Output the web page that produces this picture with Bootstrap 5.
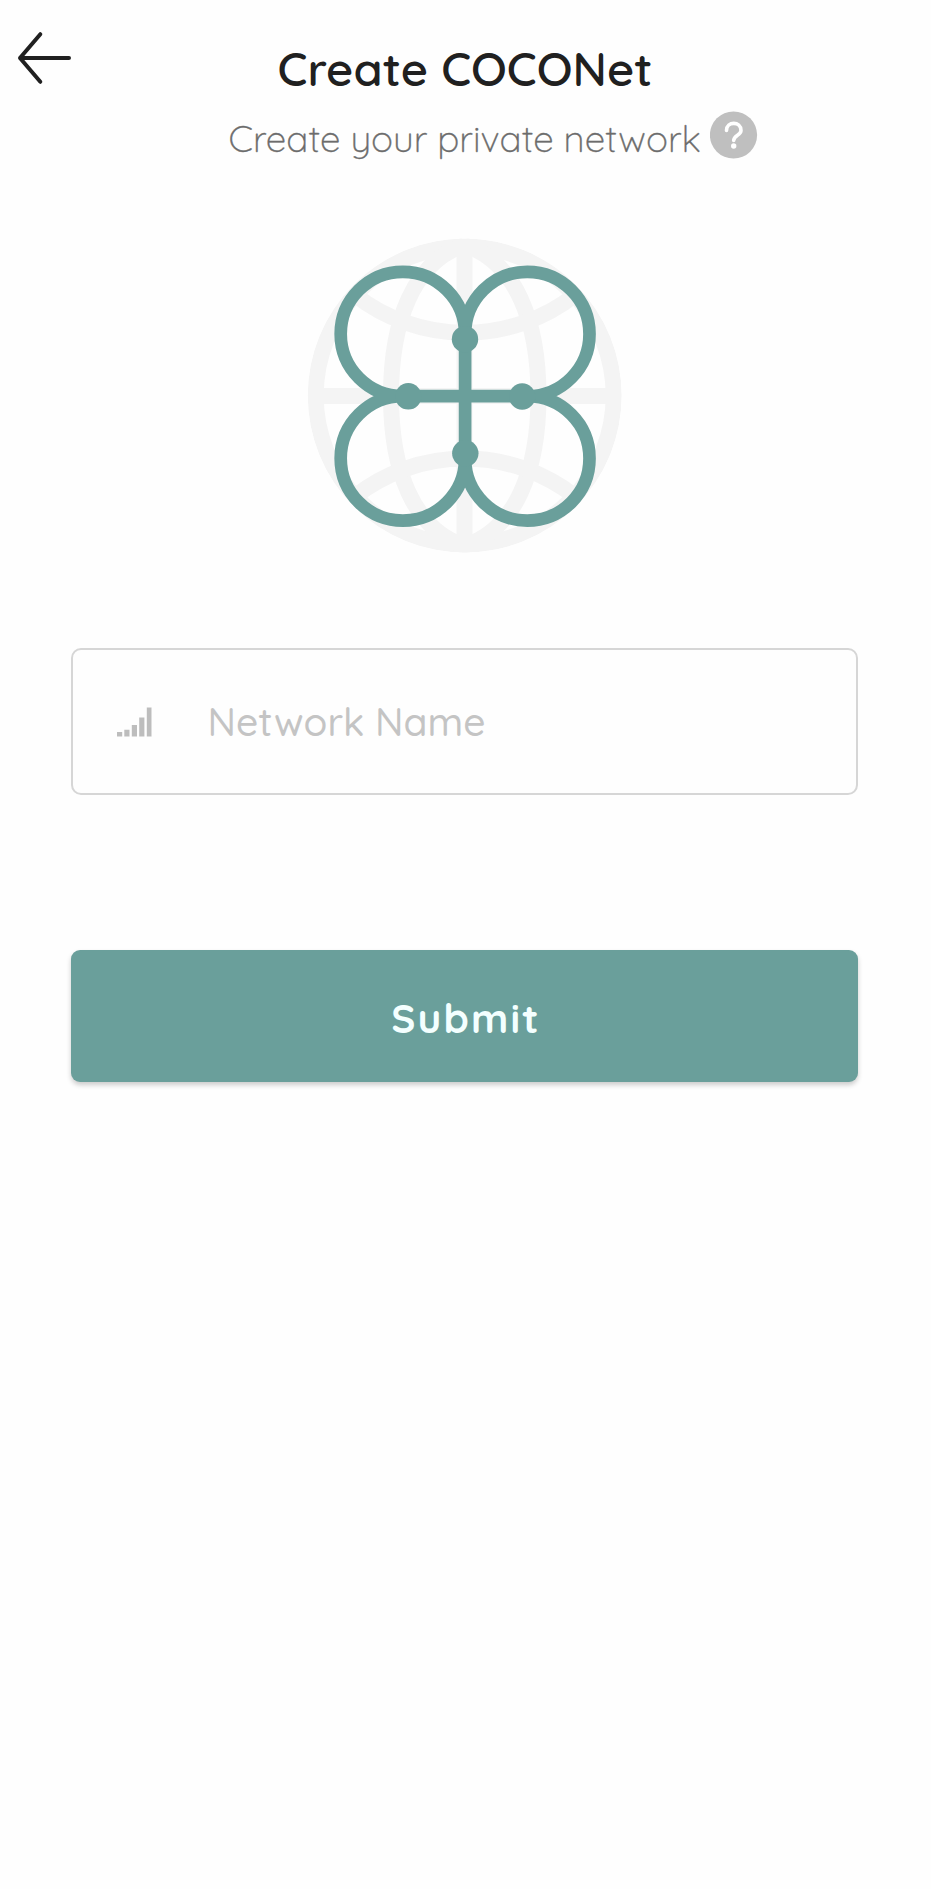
<!DOCTYPE html>
<html lang="en">
<head>
<meta charset="utf-8">
<meta name="viewport" content="width=device-width, initial-scale=1">
<title>Create COCONet</title>
<link href="https://cdn.jsdelivr.net/npm/bootstrap@5.3.0/dist/css/bootstrap.min.css" rel="stylesheet">
<style>
body{font-family:Quicksand,Lato,"Open Sans",sans-serif;background:#fefefe;color:#202020;min-height:1889px}
.back-link{left:16px;top:30px;line-height:0}
.page-head{padding-top:38.5px}
.page-title{font-size:47px;line-height:60px;font-weight:600;margin:0 1px 0 0;white-space:nowrap}
.sub-row{height:54px;margin-top:12.5px;padding-left:228.5px}
.sub-text{font-size:36.9px;line-height:54px;font-weight:300;color:#6c6c6c;-webkit-text-stroke:.35px #6c6c6c;white-space:nowrap;width:481px}
.help-btn{width:48px;height:48px;line-height:0}
.logo-wrap{margin-top:71px;line-height:0}
.form-area{padding:0 73px 0 71px;margin-top:93px}
.name-box{height:147px;border:2px solid #d6d6d6;border-radius:10px;background:#fefefe}
.name-box svg{margin-left:44px}
.name-box .form-control{font-size:39px;line-height:50px;font-weight:500;padding:1px 0 0 54.5px;color:#444}
.name-box .form-control::placeholder{color:#c4c4c4;opacity:1}
.submit-btn{height:132px;margin-top:155px;padding:5px 0 0 3px;border:0;border-radius:9px;background:#6a9f9b;color:#f4ffff;font-size:40.5px;font-weight:700;letter-spacing:2.1px;box-shadow:0 3px 5px rgba(0,0,0,.2)}
.submit-btn:hover{background:#5d918d;color:#fff}
</style>
</head>
<body>
<main class="position-relative">
  <a href="#" class="back-link position-absolute" aria-label="Back">
    <svg width="60" height="56" viewBox="16 30 60 56" fill="none" stroke="#202020" stroke-width="4" stroke-linecap="round" stroke-linejoin="round"><path d="M69 58H20M40.3 34.2L20 58L40.3 81.8"/></svg>
  </a>
  <header class="page-head">
    <h1 class="page-title text-center">Create COCONet</h1>
    <div class="sub-row d-flex">
      <div class="sub-text">Create your private network</div>
      <a href="#" class="help-btn" aria-label="Help"><svg width="48" height="48" viewBox="0 0 48 48" fill="none"><circle cx="23.5" cy="24" r="23.6" fill="#bfbfbf"/><path d="M16.500 19.500C16.500 10 31 10 31 19.500C31 24.500 23.700 24 23.700 29.500" stroke="#fff" stroke-width="3.600" stroke-linecap="round"/><circle cx="23.700" cy="35" r="2.700" fill="#fff"/></svg></a>
    </div>
  </header>
  <div class="logo-wrap d-flex justify-content-center">
    <svg width="319" height="319" viewBox="306 236 319 319" fill="none">
      <clipPath id="globe"><circle cx="464.7" cy="395.6" r="157"/></clipPath>
      <g stroke="#f4f4f4" stroke-width="16" clip-path="url(#globe)">
        <circle cx="464.7" cy="395.6" r="149"/>
        <path d="M464.500 245C413 262 391 322 391 396S413 529 464.500 546C516 529 538.500 470 538.500 396S516 262 464.500 245"/>
        <path d="M464.500 240V552M310 396H620M355 295A179 179 0 0 0 575 295M355 496.400A179 179 0 0 1 575 496.400"/>
      </g>
      <g stroke="#6a9f9b" stroke-width="12.7">
        <path d="M465.1 334A62.2 62.2 0 1 0 403 396.2H527.5A62.2 62.2 0 1 0 465.1 334V458.5A62.2 62.2 0 1 1 403 396.2M465.1 458.5A62.2 62.2 0 1 0 527.5 396.2"/>
      </g>
      <g fill="#6a9f9b"><circle cx="465" cy="339.2" r="13.2"/><circle cx="465.3" cy="453.3" r="13.2"/><circle cx="408.3" cy="396.3" r="13.2"/><circle cx="522.2" cy="396.5" r="13.2"/></g>
    </svg>
  </div>
  <form class="form-area" onsubmit="return false">
    <div class="name-box d-flex align-items-center">
      <svg class="flex-shrink-0" width="36" height="30" viewBox="0 0 36 30" fill="#bdbdbd"><path d="M0 25h5.200v4.500H0zM7.300 22.700h5.200v6.800H7.300zM14.800 18h5.200v11.500h-5.200zM22.200 10.500h5.200v19h-5.200zM29.800 .5h4.700v29h-4.700z"/></svg>
      <input type="text" class="form-control border-0 shadow-none bg-transparent" placeholder="Network Name" aria-label="Network Name">
    </div>
    <button type="submit" class="submit-btn btn w-100">Submit</button>
  </form>
</main>
<script src="https://cdn.jsdelivr.net/npm/bootstrap@5.3.0/dist/js/bootstrap.bundle.min.js"></script>
</body>
</html>
